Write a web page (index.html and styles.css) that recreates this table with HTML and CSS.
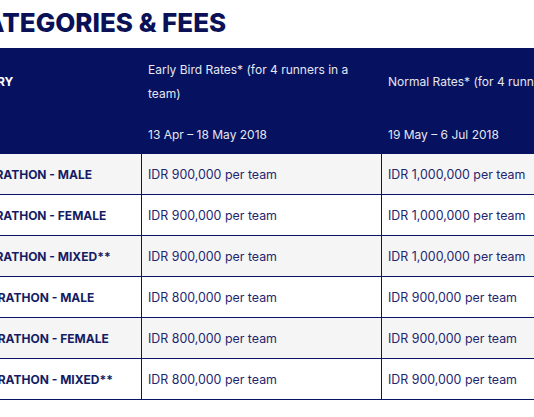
FILE: index.html
```html
<!DOCTYPE html>
<html lang="en">
<head>
<meta charset="utf-8">
<title>Categories &amp; Fees</title>
<link rel="stylesheet" href="styles.css">
</head>
<body>
<section class="page">
  <h2 class="title">CATEGORIES &amp; FEES</h2>
  <div class="fees">
    <div class="hd hd-cat">CATEGORY</div>
    <div class="hd">Early Bird Rates* (for 4 runners in a team)</div>
    <div class="hd">Normal Rates* (for 4 runners in a team)</div>
    <div class="hd hd-date"></div>
    <div class="hd hd-date">13 Apr – 18 May 2018</div>
    <div class="hd hd-date">19 May – 6 Jul 2018</div>

    <div class="c cat odd">FULL MARATHON - MALE</div>
    <div class="c odd">IDR 900,000 per team</div>
    <div class="c odd">IDR 1,000,000 per team</div>

    <div class="c cat">FULL MARATHON - FEMALE</div>
    <div class="c">IDR 900,000 per team</div>
    <div class="c">IDR 1,000,000 per team</div>

    <div class="c cat odd">FULL MARATHON - MIXED**</div>
    <div class="c odd">IDR 900,000 per team</div>
    <div class="c odd">IDR 1,000,000 per team</div>

    <div class="c cat">HALF MARATHON - MALE</div>
    <div class="c">IDR 800,000 per team</div>
    <div class="c">IDR 900,000 per team</div>

    <div class="c cat odd">HALF MARATHON - FEMALE</div>
    <div class="c odd">IDR 800,000 per team</div>
    <div class="c odd">IDR 900,000 per team</div>

    <div class="c cat">HALF MARATHON - MIXED**</div>
    <div class="c">IDR 800,000 per team</div>
    <div class="c">IDR 900,000 per team</div>
  </div>
</section>
</body>
</html>
```
FILE: styles.css
```css
html, body {
  margin: 0;
  padding: 0;
  overflow: hidden;
  background: #ffffff;
}

body {
  font-family: Inter, "Noto Sans", "Liberation Sans", sans-serif;
  color: #1e2670;
}

.page {
  margin-left: -60px;
  width: 760px;
}

.title {
  margin: 0 0 3px 0;
  padding-left: 26px;
  font-size: 26px;
  line-height: 45px;
  font-weight: 800;
  color: #0b1157;
  letter-spacing: 0px;
}

.fees {
  display: grid;
  grid-template-columns: 202px 240px 240px;
}

.hd {
  background: #06115f;
  color: #e4e6f0;
  font-size: 12px;
  line-height: 24px;
  height: 68px;
  box-sizing: border-box;
  padding: 0 6px;
  display: flex;
  align-items: center;
}

.hd-cat {
  font-weight: 700;
  color: #ffffff;
  padding-left: 7px;
}

.hd-date {
  height: 38px;
}

.c {
  height: 41px;
  box-sizing: border-box;
  border-bottom: 1px solid #0b1464;
  border-right: 1px solid #0b1464;
  padding: 0 6px;
  display: flex;
  align-items: center;
  font-size: 12.4px;
  background: #ffffff;
}

.c.odd {
  background: #f5f5f5;
}

.c.cat {
  font-weight: 700;
  font-size: 12px;
  color: #151c63;
  padding-left: 3px;
}
```
